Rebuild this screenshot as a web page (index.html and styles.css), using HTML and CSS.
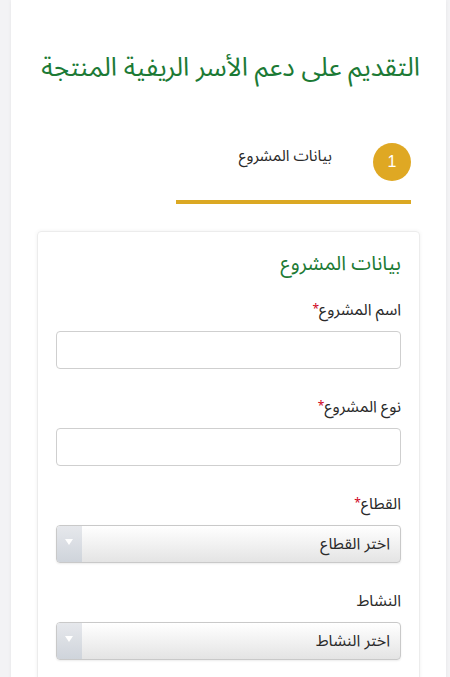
FILE: index.html
```html
<!DOCTYPE html>
<html lang="ar" dir="rtl">
<head>
<meta charset="utf-8">
<title>التقديم على دعم الأسر الريفية المنتجة</title>
<link rel="stylesheet" href="styles.css">
</head>
<body>
<div class="page">
  <h1 class="title">التقديم على دعم الأسر الريفية المنتجة</h1>
  <div class="steps">
    <div class="step active">
      <span class="step-num">1</span>
      <span class="step-label">بيانات المشروع</span>
    </div>
  </div>
  <div class="card">
    <h2 class="card-title">بيانات المشروع</h2>
    <div class="field">
      <label class="label">اسم المشروع<span class="req">*</span></label>
      <input class="input" type="text">
    </div>
    <div class="field">
      <label class="label">نوع المشروع<span class="req">*</span></label>
      <input class="input" type="text">
    </div>
    <div class="field">
      <label class="label">القطاع<span class="req">*</span></label>
      <div class="select">
        <span class="select-text">اختر القطاع</span>
        <span class="select-arrow"></span>
      </div>
    </div>
    <div class="field">
      <label class="label">النشاط</label>
      <div class="select">
        <span class="select-text">اختر النشاط</span>
        <span class="select-arrow"></span>
      </div>
    </div>
  </div>
</div>
</body>
</html>
```
FILE: styles.css
```css
* { box-sizing: border-box; }
html, body { margin: 0; padding: 0; }
body {
  background: #f3f3f5;
  font-family: "Noto Sans Arabic", "Noto Kufi Arabic", "DejaVu Sans", sans-serif;
  color: #2a2a2a;
}
.page {
  margin: 0 4px 0 11px;
  min-height: 677px;
  background: #fff;
  box-shadow: 0 0 4px rgba(0,0,0,0.06);
  padding: 50px 26px 0 26px;
}
.title {
  margin: 0;
  font-size: 26px;
  font-weight: normal;
  color: #1c7a35;
  line-height: 36px;
}
.steps {
  display: flex;
  padding: 58px 9px 0 0;
}
.step {
  display: flex;
  align-items: center;
  width: 235px;
  height: 60px;
  padding-bottom: 20px;
  border-bottom: 4px solid #dba823;
}
.step-num {
  width: 38px;
  height: 38px;
  border-radius: 50%;
  background: #dfa823;
  color: #fff;
  font-family: "Liberation Sans", sans-serif;
  font-size: 16px;
  display: flex;
  align-items: center;
  justify-content: center;
}
.step-label {
  margin-right: 41px;
  margin-top: -12px;
  font-size: 15.5px;
  color: #2a2a2a;
}
.card {
  margin-top: 27px;
  border: 1px solid #ececec;
  border-radius: 4px;
  box-shadow: 0 0 4px rgba(0,0,0,0.06);
  padding: 17px 18px 20px 18px;
}
.card-title {
  margin: 0 0 20px 0;
  font-size: 20px;
  font-weight: normal;
  color: #1c7a35;
  line-height: 30px;
}
.field { margin-bottom: 27px; }
.label {
  display: block;
  font-size: 16px;
  line-height: 22px;
  color: #2a2a2a;
  margin-bottom: 10px;
}
.req { color: #d0021b; font-size: 12px; vertical-align: top; }
.input {
  display: block;
  width: 100%;
  height: 38px;
  border: 1px solid #cfcfcf;
  border-radius: 4px;
  background: #fff;
}
.select {
  display: flex;
  align-items: center;
  height: 38px;
  border: 1px solid #c9c9c9;
  border-radius: 4px;
  background: linear-gradient(#ffffff, #e4e4e4);
  box-shadow: 0 1px 2px rgba(0,0,0,0.08);
  overflow: hidden;
}
.select-text {
  flex: 1;
  padding-right: 10px;
  font-size: 16px;
  color: #2a2a2a;
}
.select-arrow {
  width: 25px;
  align-self: stretch;
  background: linear-gradient(#e6e8ec, #cfd4db);
  position: relative;
}
.select-arrow::after {
  content: "";
  position: absolute;
  left: 8px;
  top: 13px;
  border-left: 4px solid transparent;
  border-right: 4px solid transparent;
  border-top: 6px solid #fff;
}
```
